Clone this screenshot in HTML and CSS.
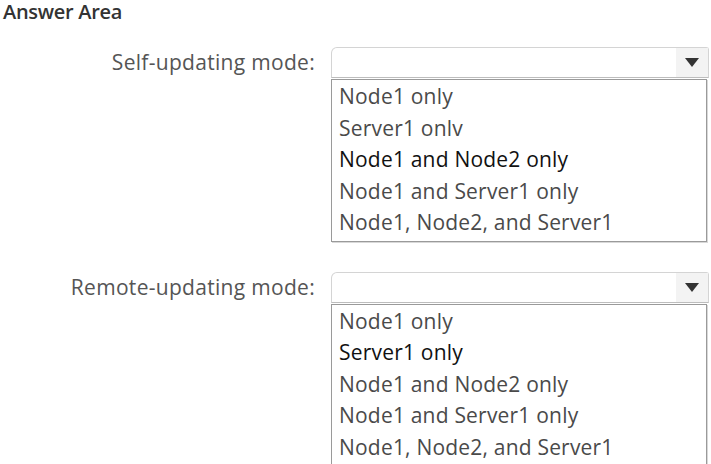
FILE: index.html
```html
<!DOCTYPE html>
<html>
<head>
<meta charset="utf-8">
<link rel="stylesheet" href="styles.css">
</head>
<body>
<div class="title">Answer Area</div>
<div class="rows">
  <div class="row">
    <div class="label">Self-updating mode:</div>
    <div class="control">
      <div class="select"><span class="arrow"><svg width="14" height="9" viewBox="0 0 14 9"><path d="M0 0 H14 L7 9 Z" fill="#333"/></svg></span></div>
      <ul class="list">
        <li>Node1 only</li>
        <li>Server1 onlv</li>
        <li class="dark">Node1 and Node2 only</li>
        <li>Node1 and Server1 only</li>
        <li>Node1, Node2, and Server1</li>
      </ul>
    </div>
  </div>
  <div class="row">
    <div class="label">Remote-updating mode:</div>
    <div class="control">
      <div class="select"><span class="arrow"><svg width="14" height="9" viewBox="0 0 14 9"><path d="M0 0 H14 L7 9 Z" fill="#333"/></svg></span></div>
      <ul class="list">
        <li>Node1 only</li>
        <li class="dark">Server1 only</li>
        <li>Node1 and Node2 only</li>
        <li>Node1 and Server1 only</li>
        <li>Node1, Node2, and Server1</li>
      </ul>
    </div>
  </div>
</div>
</body>
</html>
```
FILE: styles.css
```css
html, body {
  margin: 0;
  padding: 0;
  background: #fff;
}
body {
  font-family: "Open Sans", "Noto Sans", sans-serif;
  color: #4a4a4a;
  width: 711px;
  height: 464px;
  overflow: hidden;
}
.title {
  font-size: 20px;
  font-weight: 600;
  color: #333;
  line-height: 24px;
  padding-left: 3px;
  letter-spacing: -0.3px;
}
.rows {
  display: flex;
  flex-direction: column;
  gap: 30px;
  margin-top: 23px;
}
.row {
  display: grid;
  grid-template-columns: 331px 378px;
  align-items: start;
}
.label {
  text-align: right;
  padding-right: 16px;
  font-size: 21px;
  line-height: 30px;
  color: #555;
  letter-spacing: 0.3px;
}
.control {
  display: flex;
  flex-direction: column;
}
.select {
  height: 29px;
  border: 1px solid #d4d4d4;
  border-bottom: 1px solid #bdbdbd;
  border-top-left-radius: 6px;
  border-top-right-radius: 3px;
  background: #fff;
  display: flex;
  justify-content: flex-end;
}
.arrow {
  width: 32px;
  background: #f3f3f3;
  display: flex;
  align-items: center;
  justify-content: center;
}
.list {
  list-style: none;
  margin: 1px 0 0 0;
  padding: 1px 0 2px 0;
  border: 1px solid #9a9a9a;
  box-shadow: 1px 1px 0 #d8d8d8;
  width: 374px;
}
.list li {
  font-size: 21px;
  line-height: 31.5px;
  padding-left: 7px;
  color: #4a4a4a;
  letter-spacing: 0.2px;
}
.list li.dark {
  color: #111;
}
```
